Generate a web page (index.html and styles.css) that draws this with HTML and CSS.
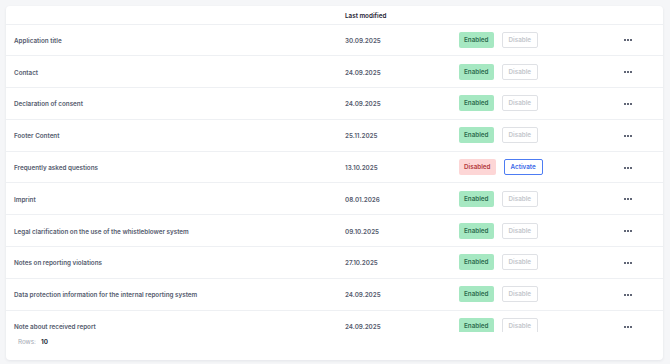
FILE: index.html
```html
<!DOCTYPE html>
<html>
<head>
<meta charset="utf-8">
<link rel="stylesheet" href="styles.css">
</head>
<body>
<div class="card">
  <div class="scroll">
    <div class="row head">
      <div class="cell"></div>
      <div class="cell txt">Last modified</div>
      <div class="cell"></div>
      <div class="cell"></div>
    </div>
    <div class="row">
      <div class="cell txt">Application title</div>
      <div class="cell txt">30.09.2025</div>
      <div class="cell status"><span class="badge on">Enabled</span><span class="btn off">Disable</span></div>
      <div class="cell act"><svg class="dots" width="8" height="2" viewBox="0 0 8 2"><circle cx="1" cy="1" r="1"/><circle cx="4" cy="1" r="1"/><circle cx="7" cy="1" r="1"/></svg></div>
    </div>
    <div class="row">
      <div class="cell txt">Contact</div>
      <div class="cell txt">24.09.2025</div>
      <div class="cell status"><span class="badge on">Enabled</span><span class="btn off">Disable</span></div>
      <div class="cell act"><svg class="dots" width="8" height="2" viewBox="0 0 8 2"><circle cx="1" cy="1" r="1"/><circle cx="4" cy="1" r="1"/><circle cx="7" cy="1" r="1"/></svg></div>
    </div>
    <div class="row">
      <div class="cell txt">Declaration of consent</div>
      <div class="cell txt">24.09.2025</div>
      <div class="cell status"><span class="badge on">Enabled</span><span class="btn off">Disable</span></div>
      <div class="cell act"><svg class="dots" width="8" height="2" viewBox="0 0 8 2"><circle cx="1" cy="1" r="1"/><circle cx="4" cy="1" r="1"/><circle cx="7" cy="1" r="1"/></svg></div>
    </div>
    <div class="row">
      <div class="cell txt">Footer Content</div>
      <div class="cell txt">25.11.2025</div>
      <div class="cell status"><span class="badge on">Enabled</span><span class="btn off">Disable</span></div>
      <div class="cell act"><svg class="dots" width="8" height="2" viewBox="0 0 8 2"><circle cx="1" cy="1" r="1"/><circle cx="4" cy="1" r="1"/><circle cx="7" cy="1" r="1"/></svg></div>
    </div>
    <div class="row">
      <div class="cell txt">Frequently asked questions</div>
      <div class="cell txt">13.10.2025</div>
      <div class="cell status"><span class="badge bad">Disabled</span><span class="btn activate">Activate</span></div>
      <div class="cell act"><svg class="dots" width="8" height="2" viewBox="0 0 8 2"><circle cx="1" cy="1" r="1"/><circle cx="4" cy="1" r="1"/><circle cx="7" cy="1" r="1"/></svg></div>
    </div>
    <div class="row">
      <div class="cell txt">Imprint</div>
      <div class="cell txt">08.01.2026</div>
      <div class="cell status"><span class="badge on">Enabled</span><span class="btn off">Disable</span></div>
      <div class="cell act"><svg class="dots" width="8" height="2" viewBox="0 0 8 2"><circle cx="1" cy="1" r="1"/><circle cx="4" cy="1" r="1"/><circle cx="7" cy="1" r="1"/></svg></div>
    </div>
    <div class="row">
      <div class="cell txt">Legal clarification on the use of the whistleblower system</div>
      <div class="cell txt">09.10.2025</div>
      <div class="cell status"><span class="badge on">Enabled</span><span class="btn off">Disable</span></div>
      <div class="cell act"><svg class="dots" width="8" height="2" viewBox="0 0 8 2"><circle cx="1" cy="1" r="1"/><circle cx="4" cy="1" r="1"/><circle cx="7" cy="1" r="1"/></svg></div>
    </div>
    <div class="row">
      <div class="cell txt">Notes on reporting violations</div>
      <div class="cell txt">27.10.2025</div>
      <div class="cell status"><span class="badge on">Enabled</span><span class="btn off">Disable</span></div>
      <div class="cell act"><svg class="dots" width="8" height="2" viewBox="0 0 8 2"><circle cx="1" cy="1" r="1"/><circle cx="4" cy="1" r="1"/><circle cx="7" cy="1" r="1"/></svg></div>
    </div>
    <div class="row">
      <div class="cell txt">Data protection information for the internal reporting system</div>
      <div class="cell txt">24.09.2025</div>
      <div class="cell status"><span class="badge on">Enabled</span><span class="btn off">Disable</span></div>
      <div class="cell act"><svg class="dots" width="8" height="2" viewBox="0 0 8 2"><circle cx="1" cy="1" r="1"/><circle cx="4" cy="1" r="1"/><circle cx="7" cy="1" r="1"/></svg></div>
    </div>
    <div class="row">
      <div class="cell txt">Note about received report</div>
      <div class="cell txt">24.09.2025</div>
      <div class="cell status"><span class="badge on">Enabled</span><span class="btn off">Disable</span></div>
      <div class="cell act"><svg class="dots" width="8" height="2" viewBox="0 0 8 2"><circle cx="1" cy="1" r="1"/><circle cx="4" cy="1" r="1"/><circle cx="7" cy="1" r="1"/></svg></div>
    </div>
  </div>
  <div class="footer"><span class="lbl">Rows:</span><span class="num">10</span></div>
</div>
</body>
</html>
```
FILE: styles.css
```css
* { box-sizing: border-box; }
html, body { margin: 0; padding: 0; }
body {
  background: #f5f6f8;
  padding: 6px 7px 4px 6px;
  font-family: Inter, "Noto Sans", sans-serif;
  font-size: 6.3px;
  color: #555b6e;
}
.card {
  background: #fff;
  border-radius: 4px;
  box-shadow: 0 1px 3px rgba(30, 40, 60, 0.08);
  height: 354px;
  display: flex;
  flex-direction: column;
  overflow: hidden;
}
.scroll {
  height: 326px;
  overflow: hidden;
}
.row {
  display: grid;
  grid-template-columns: 331px 114px 159px 1fr;
  height: 31.8px;
  border-bottom: 1px solid #eef0f3;
  align-items: center;
}
.row.head {
  height: 18.5px;
  color: #1f2433;
}
.cell { padding-left: 8px; font-weight: 600; }
.txt { padding-top: 2px; }
.status { display: flex; gap: 8px; align-items: center; }
.badge, .btn {
  height: 16px;
  line-height: 16px;
  padding: 0 5px;
  border-radius: 2px;
  font-weight: 600;
  white-space: nowrap;
}
.badge.on { background: #a6e8c2; color: #2f6d50; }
.badge.bad { background: #fdd6d6; color: #b3393d; }
.btn { border: 1px solid #dfe1e5; line-height: 14px; color: #c3c6cc; background: #fff; padding: 0 6px; }
.btn.activate { border-color: #4d7cf3; color: #3a68e8; }
.act { padding-left: 14px; padding-top: 1px; display: flex; align-items: center; }
.dots { fill: #2d3348; display: block; }
.footer {
  padding: 4px 12px;
  display: flex;
  gap: 5px;
  align-items: center;
  height: 20px;
}
.lbl { color: #a2a7b1; font-weight: 400; }
.num { color: #2a2f3e; font-weight: 700; }
```
